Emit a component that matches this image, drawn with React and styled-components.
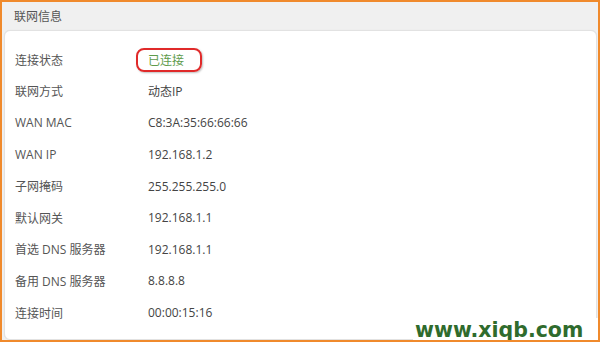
import React from "react";
import styled, { createGlobalStyle } from "styled-components";

const Global = createGlobalStyle`
  html, body { margin: 0; padding: 0; background: #fff; }
  body { font-family: "Open Sans", "Noto Sans CJK SC", sans-serif; }
`;

const Frame = styled.div`
  position: relative;
  width: 600px;
  height: 342px;
  box-sizing: border-box;
  border: 2px solid #f08a2c;
  background: #f0f0f0;
  display: flex;
  flex-direction: column;
  overflow: hidden;
`;

const Header = styled.div`
  height: 28px;
  display: flex;
  align-items: center;
  padding-left: 12px;
  font-size: 12px;
  color: #555;
`;

const Card = styled.div`
  flex: 1;
  margin: 0 1px 0 2px;
  background: #fff;
  border: 1px solid #e2e2e2;
  border-radius: 6px;
  padding: 13px 0 0 10px;
  box-shadow: 0 0 1px rgba(0, 0, 0, 0.08);
`;

const Row = styled.div`
  height: 31.6px;
  display: grid;
  grid-template-columns: 133px 1fr;
  align-items: center;
  font-size: 12px;
`;

const Label = styled.span`
  color: #555;
`;

const Value = styled.span`
  color: ${(p) => (p.$ok ? "#5e9b4c" : "#444")};
  display: flex;
  align-items: center;
`;

const Circled = styled.span`
  position: relative;
  display: inline-block;
  &::after {
    content: "";
    position: absolute;
    left: -12px;
    top: 50%;
    transform: translateY(-50%);
    width: 66px;
    height: 24px;
    box-sizing: border-box;
    border: 2.5px solid #e02a2a;
    border-radius: 8px;
    box-shadow: 1px 1px 2px rgba(0,0,0,0.25);
  }
`;

const Watermark = styled.div`
  position: absolute;
  right: -2px;
  bottom: -2px;
  width: 187px;
  height: 24px;
  background: #fff;
  display: flex;
  align-items: center;
  padding-left: 2px;
  box-sizing: border-box;
  font-family: "DejaVu Sans", sans-serif;
  font-weight: bold;
  font-size: 20.5px;
  color: #2f6b2d;
`;

const rows = [
  ["连接状态", "已连接", true],
  ["联网方式", "动态IP"],
  ["WAN MAC", "C8:3A:35:66:66:66"],
  ["WAN IP", "192.168.1.2"],
  ["子网掩码", "255.255.255.0"],
  ["默认网关", "192.168.1.1"],
  ["首选 DNS 服务器", "192.168.1.1"],
  ["备用 DNS 服务器", "8.8.8.8"],
  ["连接时间", "00:00:15:16"],
];

export default function App() {
  return (
    <>
      <Global />
      <Frame>
        <Header>联网信息</Header>
        <Card>
          {rows.map(([l, v, ok]) => (
            <Row key={l}>
              <Label>{l}</Label>
              <Value $ok={ok}>{ok ? <Circled>{v}</Circled> : v}</Value>
            </Row>
          ))}
        </Card>
        <Watermark>www.xiqb.com</Watermark>
      </Frame>
    </>
  );
}
